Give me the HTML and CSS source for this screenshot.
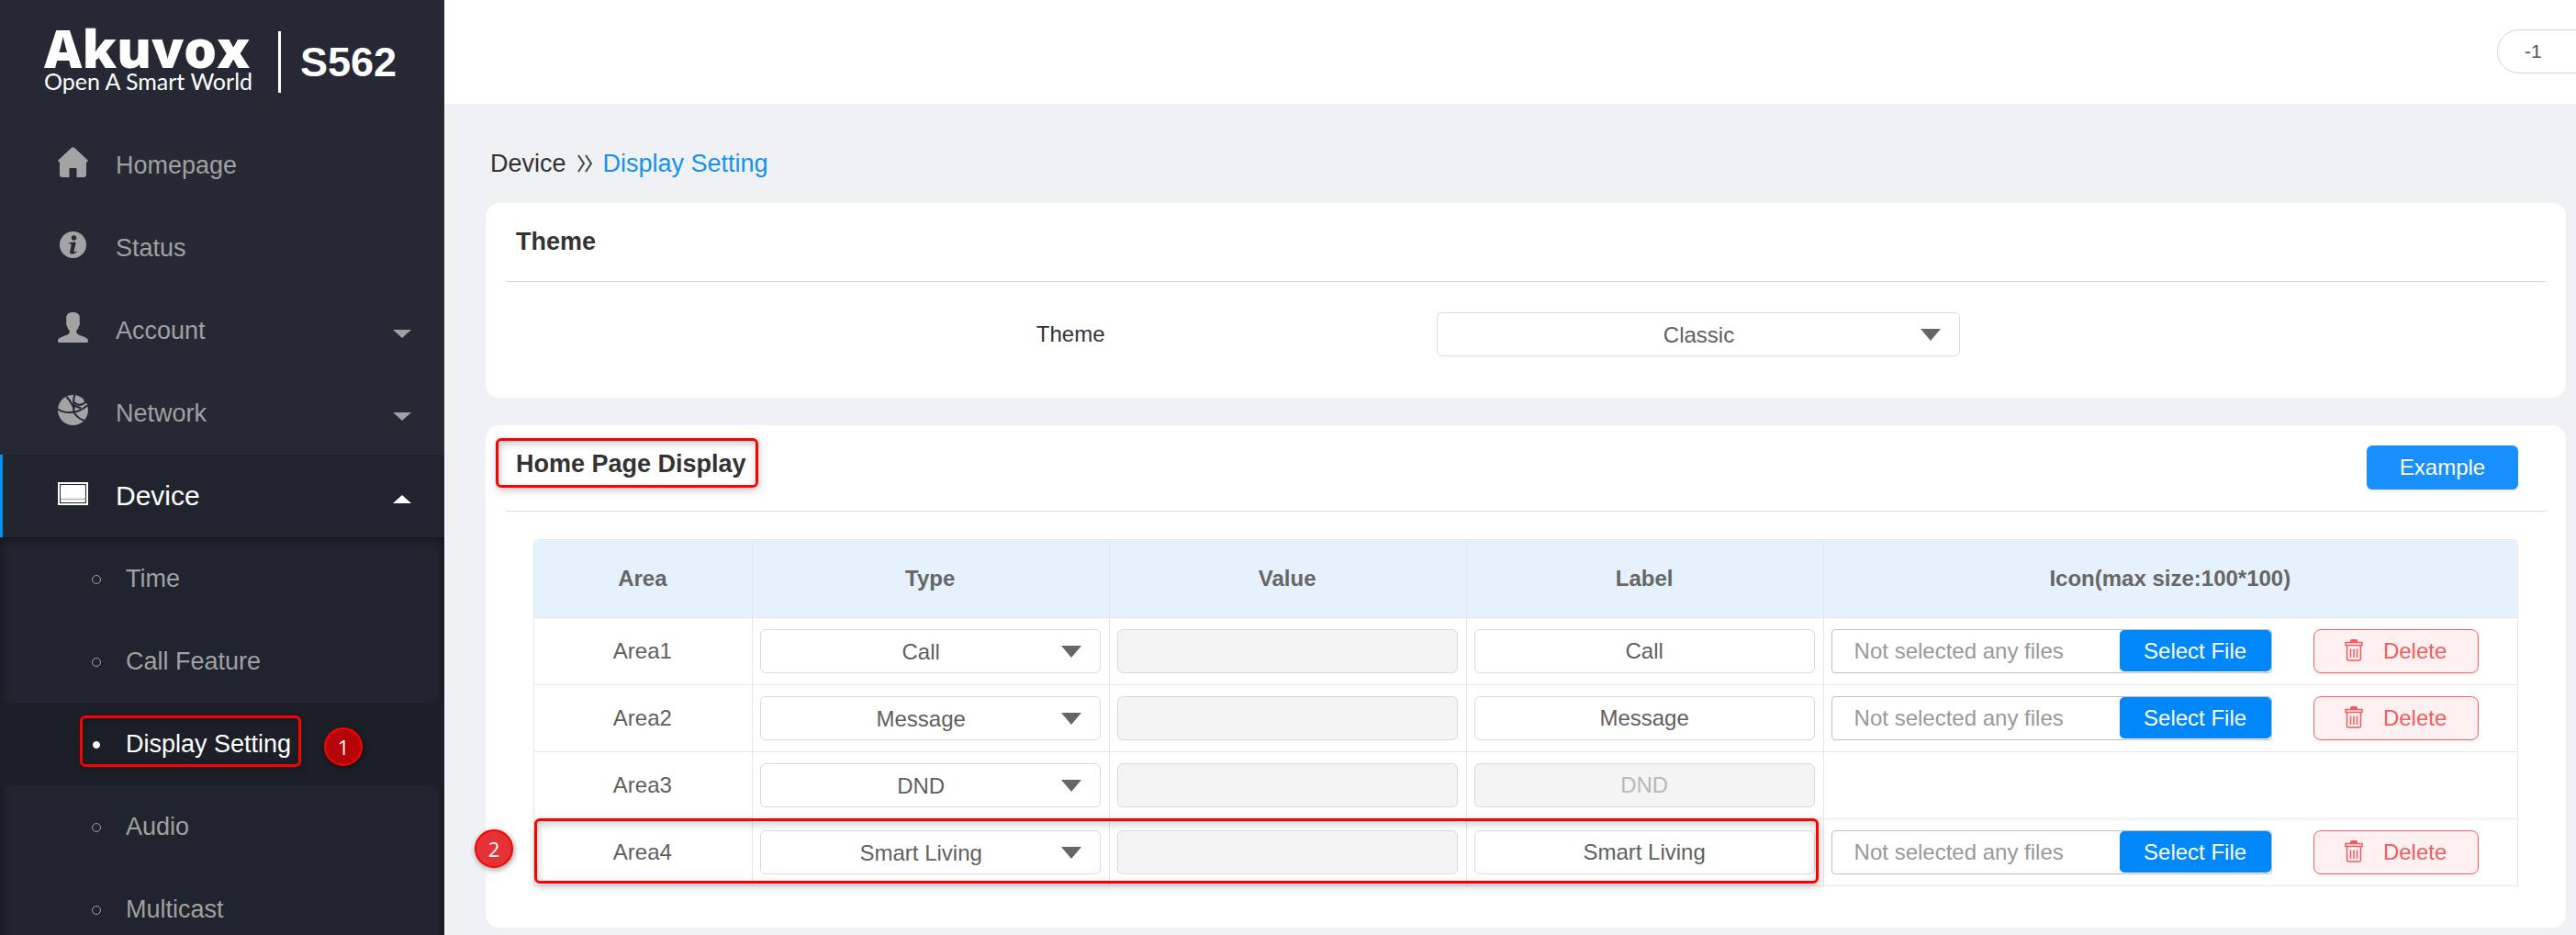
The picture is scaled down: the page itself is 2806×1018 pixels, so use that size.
FILE: index.html
```html
<!DOCTYPE html>
<html lang="en">
<head>
<meta charset="utf-8">
<title>Akuvox S562 - Display Setting</title>
<link rel="stylesheet" href="styles.css">
</head>
<body>
<div class="app">
  <aside class="sidebar">
    <div class="brand">
      <div class="logo">
        <span class="logo-name">Akuvox</span>
        <span class="logo-slogan">Open A Smart World</span>
      </div>
      <span class="model">S562</span>
    </div>
    <nav>
      <ul class="menu">
        <li><a class="menu-item" href="#home">
          <svg class="menu-icon" viewBox="0 0 33 33"><path d="M15 .8q1.500-1.300 3 0L32.600 14.600q1 1.200-.8 1.600H31V30q0 3-3 3h-7.500v-9q0-1-1-1h-6q-1 0-1 1v9H5q-3 0-3-3V16.200h-.8q-1.800-.4-.8-1.600z"/></svg>
          <span class="menu-label">Homepage</span></a></li>
        <li><a class="menu-item" href="#status">
          <svg class="menu-icon" viewBox="0 0 33 33"><circle cx="16.500" cy="16.500" r="14.500"/><circle class="cut" cx="17.500" cy="9" r="2.700"/><path class="cut" d="M12.300 14.200l6.500-.7q1 0 .8 1l-2 8.500q-.3 1.500.8 1.500l2-.9.3 1q-2.200 2-4.700 2-3.400 0-2.800-3.200l1.500-6.300q.3-1.500-.7-1.600l-1.900-.2z"/></svg>
          <span class="menu-label">Status</span></a></li>
        <li><a class="menu-item" href="#account">
          <svg class="menu-icon" viewBox="0 0 33 33"><path d="M16.500 0c5 0 7.600 2.500 7.300 7l-.2 4c.9.300.8 2-.6 3.900-.6 2.600-1.700 3.600-2.600 4.900-.6 3.100.7 4.200 4.100 5.500 4.900 1.700 8.500 2.700 8.500 6 0 1.200-.4 1.700-1.500 1.700h-30C.4 33 0 32.500 0 31.300c0-3.300 3.600-4.300 8.500-6 3.400-1.300 4.700-2.400 4.100-5.500-.9-1.300-2-2.300-2.600-4.900-1.400-1.900-1.500-3.600-.6-3.900L9.200 7c-.3-4.500 2.300-7 7.300-7z"/></svg>
          <span class="menu-label">Account</span><span class="caret"></span></a></li>
        <li><a class="menu-item" href="#network">
          <svg class="menu-icon" viewBox="0 0 33 33"><circle cx="16.500" cy="16.500" r="16.500"/><path class="line" d="M0 15.500q6 4 15 3.500T32 11.500M9.500 2q9 10 8 17M18.500-1Q16 7 18 15M17 18.500q5 7.500 12 9.500M18 8q4 4.500 9 2t4-7M18 11.500l7 3"/><path class="cut" d="M28 5l6-2v9l-3-1.500z"/><circle cx="31" cy="10" r="1"/></svg>
          <span class="menu-label">Network</span><span class="caret"></span></a></li>
        <li><a class="menu-item open" href="#device">
          <svg class="menu-icon" viewBox="0 0 33 33"><path fill-rule="evenodd" d="M0 5h33v25H0zM2 7v21h29V7z"/><rect x="3" y="8" width="27" height="19" rx="1"/><path class="shade" d="M3 22.500h27v2H3z"/></svg>
          <span class="menu-label">Device</span><span class="caret up"></span></a>
          <ul class="submenu">
            <li><a class="sub-item" href="#time"><span class="dot"></span>Time</a></li>
            <li><a class="sub-item" href="#call"><span class="dot"></span>Call Feature</a></li>
            <li><a class="sub-item active" href="#display"><span class="dot"></span>Display Setting
              <span class="mark mark-menu"><span class="badge badge-dark">1</span></span></a></li>
            <li><a class="sub-item" href="#audio"><span class="dot"></span>Audio</a></li>
            <li><a class="sub-item" href="#multicast"><span class="dot"></span>Multicast</a></li>
          </ul></li>
      </ul>
    </nav>
  </aside>

  <main class="main">
    <header class="topbar"><button class="pill" type="button">-1</button></header>
    <div class="content">
      <div class="breadcrumb">
        <span>Device</span>
        <svg class="crumb-sep" viewBox="0 0 16 20"><path d="M1 1l6 9-6 9M9 1l6 9-6 9"/></svg>
        <a href="#display">Display Setting</a>
      </div>

      <section class="card">
        <div class="card-head"><h2>Theme</h2></div>
        <div class="form-row">
          <label for="theme">Theme</label>
          <div class="select"><select id="theme"><option>Classic</option></select></div>
        </div>
      </section>

      <section class="card">
        <div class="card-head">
          <h2 class="marked">Home Page Display<span class="mark mark-title"></span></h2>
          <button class="btn-example" type="button">Example</button>
        </div>
        <div class="table-wrap">
          <table class="areas">
            <thead>
              <tr><th class="c-area">Area</th><th class="c-mid">Type</th><th class="c-mid">Value</th><th class="c-mid">Label</th><th>Icon(max size:100*100)</th></tr>
            </thead>
            <tbody>
              <tr>
                <td>Area1</td>
                <td><div class="select"><select aria-label="Area1 type"><option>Call</option></select></div></td>
                <td><input class="field" type="text" aria-label="Area1 value" disabled></td>
                <td><input class="field" type="text" aria-label="Area1 label" value="Call"></td>
                <td><div class="icon-cell">
                  <div class="file"><input type="text" aria-label="Area1 icon file" placeholder="Not selected any files" readonly><button type="button">Select File</button></div>
                  <button class="btn-delete" type="button"><svg class="trash" viewBox="0 0 20 24"><path class="solid" d="M6 3V1.500Q6 0 7.500 0h5Q14 0 14 1.500V3z"/><path d="M1 3.500h18v3H1zM2.500 6.500v14.500q0 2 2 2h11q2 0 2-2V6.500M6.500 10.500v9.500M10 10.500v9.500M13.500 10.500v9.500"/></svg>Delete</button>
                </div></td>
              </tr>
              <tr>
                <td>Area2</td>
                <td><div class="select"><select aria-label="Area2 type"><option>Message</option></select></div></td>
                <td><input class="field" type="text" aria-label="Area2 value" disabled></td>
                <td><input class="field" type="text" aria-label="Area2 label" value="Message"></td>
                <td><div class="icon-cell">
                  <div class="file"><input type="text" aria-label="Area2 icon file" placeholder="Not selected any files" readonly><button type="button">Select File</button></div>
                  <button class="btn-delete" type="button"><svg class="trash" viewBox="0 0 20 24"><path class="solid" d="M6 3V1.500Q6 0 7.500 0h5Q14 0 14 1.500V3z"/><path d="M1 3.500h18v3H1zM2.500 6.500v14.500q0 2 2 2h11q2 0 2-2V6.500M6.500 10.500v9.500M10 10.500v9.500M13.500 10.500v9.500"/></svg>Delete</button>
                </div></td>
              </tr>
              <tr>
                <td>Area3</td>
                <td><div class="select"><select aria-label="Area3 type"><option>DND</option></select></div></td>
                <td><input class="field" type="text" aria-label="Area3 value" disabled></td>
                <td><input class="field" type="text" aria-label="Area3 label" value="DND" disabled></td>
                <td></td>
              </tr>
              <tr>
                <td>Area4</td>
                <td><div class="select"><select aria-label="Area4 type"><option>Smart Living</option></select></div></td>
                <td><input class="field" type="text" aria-label="Area4 value" disabled></td>
                <td><input class="field" type="text" aria-label="Area4 label" value="Smart Living"></td>
                <td><div class="icon-cell">
                  <div class="file"><input type="text" aria-label="Area4 icon file" placeholder="Not selected any files" readonly><button type="button">Select File</button></div>
                  <button class="btn-delete" type="button"><svg class="trash" viewBox="0 0 20 24"><path class="solid" d="M6 3V1.500Q6 0 7.500 0h5Q14 0 14 1.500V3z"/><path d="M1 3.500h18v3H1zM2.500 6.500v14.500q0 2 2 2h11q2 0 2-2V6.500M6.500 10.500v9.500M10 10.500v9.500M13.500 10.500v9.500"/></svg>Delete</button>
                </div></td>
              </tr>
            </tbody>
          </table>
          <div class="mark mark-row"><span class="badge badge-row">2</span></div>
        </div>
      </section>
    </div>
  </main>
</div>
</body>
</html>
```
FILE: styles.css
```css
* { box-sizing: border-box; }

body {
  margin: 0;
  font-family: "Liberation Sans", Arial, sans-serif;
  font-size: 24px;
  color: #333;
  background: #f0f1f5;
}

a { text-decoration: none; }
ul { margin: 0; padding: 0; list-style: none; }

button, input, select {
  margin: 0;
  font-family: inherit;
  font-size: 24px;
}

.app { display: flex; height: 100vh; overflow: hidden; }

/* Sidebar */
.sidebar {
  flex: 0 0 484px;
  background: #262833;
  color: #a0a0a0;
  overflow: hidden;
}

.brand { display: flex; align-items: center; height: 135px; padding: 0 0 0 48px; }

.logo {
  display: flex;
  flex-direction: column;
  width: 258px;
  height: 67px;
  color: #fff;
  border-right: 3px solid #fff;
}
.logo-name { font: 800 57px/36px "Open Sans", sans-serif; }
.logo-slogan { font: 400 25px/36px Lato, sans-serif; white-space: nowrap; }

.model { margin-left: 21px; font-size: 45px; font-weight: bold; color: #fff; }

.menu-item {
  display: flex;
  align-items: center;
  height: 90px;
  padding: 0 36px 0 60px;
  border-left: 3px solid transparent;
  color: #a0a0a0;
  font-size: 27px;
}
.menu-icon { width: 33px; height: 33px; margin: 0 30px 7px 0; fill: #a3a3a5; overflow: visible; }
.menu-icon .cut { fill: #262833; }
.menu-icon .line { fill: none; stroke: #262833; stroke-width: 2; }
.menu-icon .shade { fill: #c4c4c4; }
.menu-label { flex: 1; }

.caret {
  margin-top: 7px;
  border: 10px solid transparent;
  border-top: 9px solid #a0a0a0;
  border-bottom: 0;
}
.caret.up { border-top: 0; border-bottom: 9px solid #fff; }

.menu-item.open {
  background: #20242e;
  border-left-color: #0091ea;
  color: #fff;
  font-size: 30px;
}
.open .menu-icon { fill: #fff; }

.submenu { background: #20242e; box-shadow: inset -1px 2px 12px rgba(0, 0, 0, .45); }

.sub-item {
  position: relative;
  display: flex;
  align-items: center;
  height: 90px;
  padding-left: 100px;
  color: #a0a0a0;
  font-size: 27px;
}
.dot { width: 10px; height: 10px; margin: 2px 27px 0 0; border: 1px solid #a0a0a0; border-radius: 50%; }
.sub-item.active { background: #1c1f27; color: #fff; }
.active .dot { width: 8px; height: 8px; margin: 2px 28px 0 1px; background: #fff; border-color: #fff; }

/* Callout marks */
.mark {
  position: absolute;
  border: 3px solid #f00;
  border-radius: 6px;
  box-shadow: 1px 3px 8px rgba(0, 0, 0, .22), inset 1px 3px 8px rgba(0, 0, 0, .22);
  pointer-events: none;
}
.mark-menu { left: 87px; top: 14px; width: 241px; height: 56px; }
.mark-title { left: -22px; top: -8px; right: -13px; height: 54px; }
.mark-row { left: 1px; right: 762px; bottom: 3px; height: 71px; }

.badge {
  position: absolute;
  width: 42px;
  height: 42px;
  border: 2px solid #f00;
  border-radius: 50%;
  color: #fff;
  font: 400 22px/38px "Open Sans", sans-serif;
  text-align: center;
  box-shadow: 1px 2px 6px rgba(0, 0, 0, .4);
}
.badge-dark { left: 263px; top: 10px; background: #b60508; }
.badge-row { left: -68px; top: 9px; background: #e53236; }

/* Main */
.main { flex: 1; min-width: 0; }

.topbar { display: flex; justify-content: flex-end; height: 113px; padding-top: 32px; background: #fff; overflow: hidden; }
.pill {
  flex: 0 0 160px;
  height: 48px;
  margin-right: -74px;
  padding: 0 0 0 29px;
  border: 1px solid #d5d5d5;
  border-radius: 24px;
  background: #fff;
  color: #555;
  font-size: 21px;
  text-align: left;
}

.content { padding: 45px 11px 8px 45px; }

.breadcrumb {
  display: flex;
  align-items: center;
  gap: 12px;
  height: 40px;
  margin: 0 5px 23px;
  font-size: 27px;
}
.breadcrumb a { color: #1492ee; }
.crumb-sep { width: 16px; height: 20px; fill: none; stroke: #444; stroke-width: 2; }

.card { margin-bottom: 30px; border-radius: 15px; background: #fff; }

.card-head {
  display: flex;
  justify-content: space-between;
  align-items: flex-start;
  margin: 0 22px;
  padding: 22px 30px 23px 11px;
  border-bottom: 1px solid #d3dadf;
}
.card-head h2 { position: relative; margin: 0; font-size: 27px; line-height: 40px; }

.btn-example {
  width: 165px;
  height: 48px;
  border: 0;
  border-radius: 6px;
  background: #1890ff;
  color: #fff;
  text-shadow: 0 -1px 0 rgba(0, 0, 0, .12);
  box-shadow: 0 3px 0 rgba(0, 0, 0, .05);
}

.form-row {
  display: grid;
  grid-template-columns: 50fr 570px 73fr;
  align-items: center;
  margin: 0 22px;
  padding: 33px 0 45px 25.5%;
}

.select { position: relative; }
.select::after {
  content: "";
  position: absolute;
  top: 18px;
  right: 21px;
  border: 11px solid transparent;
  border-top: 13px solid #666;
  border-bottom: 0;
  pointer-events: none;
}
.select select, .field {
  display: block;
  width: 100%;
  height: 48px;
  padding: 0 10px;
  appearance: none;
  border: 1px solid #d9d9d9;
  border-radius: 6px;
  background: #fff;
  color: #5f5f5f;
  text-align: center;
  text-align-last: center;
}
.areas .select select { padding-right: 30px; }
.field:disabled { background: #f4f4f4; color: #b8b8b8; }

/* Areas table */
.table-wrap { position: relative; margin: 0 52px; padding: 30px 0 0; }
.card:last-child { margin-bottom: 0; padding-bottom: 45px; }

.areas {
  width: 100%;
  table-layout: fixed;
  border-collapse: separate;
  border-spacing: 0;
  border: 1px solid #e5e7e9;
  border-width: 1px 0 0 1px;
  border-radius: 6px 6px 0 0;
  color: #5f5f5f;
}
.areas th, .areas td {
  height: 73px;
  padding: 0 9px 0 8px;
  border: 1px solid #e5e7e9;
  border-width: 0 1px 1px 0;
  text-align: center;
}
.areas th { height: 85px; background: #e5f1fd; color: #666; }
.areas th:first-child { border-top-left-radius: 6px; }
.areas th:last-child { border-top-right-radius: 6px; }
.c-area { width: 11%; }
.c-mid { width: 18%; }

.icon-cell { display: flex; gap: 45px; }

.file {
  display: flex;
  width: 480px;
  height: 48px;
  border: 1px solid #bfbfbf;
  border-radius: 4px;
}
.file input {
  flex: 1;
  min-width: 0;
  padding: 0 0 0 24px;
  border: 0;
  background: transparent;
  color: #999;
}
.file input::placeholder { color: #999; opacity: 1; }
.file button {
  width: 165px;
  height: 45px;
  padding: 0;
  border: 0;
  border-radius: 5px;
  background: #0087fa;
  color: #fff;
}

.btn-delete {
  display: flex;
  align-items: center;
  justify-content: center;
  gap: 22px;
  width: 180px;
  height: 48px;
  padding: 0;
  border: 1px solid #ff6063;
  border-radius: 8px;
  background: #fff1f1;
  color: #f05f60;
  box-shadow: 0 3px 0 rgba(0, 0, 0, .04);
}
.trash { width: 20px; height: 24px; margin-bottom: 2px; fill: none; stroke: #f45b5d; stroke-width: 1.500; }
.trash .solid { fill: #f45b5d; stroke: none; }
```
